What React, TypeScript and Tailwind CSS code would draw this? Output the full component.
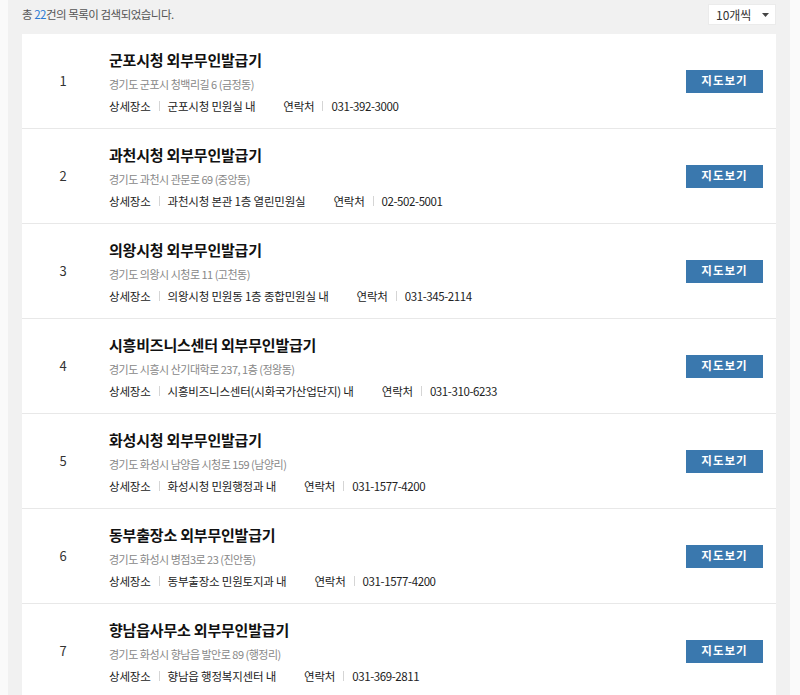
import React from 'react';

type Place = {
  name: string;
  address: string;
  detail: string;
  phone: string;
};

const places: Place[] = [
  { name: '군포시청 외부무인발급기', address: '경기도 군포시 청백리길 6 (금정동)', detail: '군포시청 민원실 내', phone: '031-392-3000' },
  { name: '과천시청 외부무인발급기', address: '경기도 과천시 관문로 69 (중앙동)', detail: '과천시청 본관 1층 열린민원실', phone: '02-502-5001' },
  { name: '의왕시청 외부무인발급기', address: '경기도 의왕시 시청로 11 (고천동)', detail: '의왕시청 민원동 1층 종합민원실 내', phone: '031-345-2114' },
  { name: '시흥비즈니스센터 외부무인발급기', address: '경기도 시흥시 산기대학로 237, 1층 (정왕동)', detail: '시흥비즈니스센터(시화국가산업단지) 내', phone: '031-310-6233' },
  { name: '화성시청 외부무인발급기', address: '경기도 화성시 남양읍 시청로 159 (남양리)', detail: '화성시청 민원행정과 내', phone: '031-1577-4200' },
  { name: '동부출장소 외부무인발급기', address: '경기도 화성시 병점3로 23 (진안동)', detail: '동부출장소 민원토지과 내', phone: '031-1577-4200' },
  { name: '향남읍사무소 외부무인발급기', address: '경기도 화성시 향남읍 발안로 89 (행정리)', detail: '향남읍 행정복지센터 내', phone: '031-369-2811' },
];

function Sep() {
  return <span className="mx-[8px] inline-block h-[10px] w-px bg-[#d5d5d5] align-[-1px]" />;
}

function Row({ p, no }: { p: Place; no: number }) {
  return (
    <li className="flex h-[95px] items-center border-b border-[#e8e8e8]">
      <div className="w-[82px] text-center text-[13px] text-[#333]">{no}</div>
      <div className="flex-1 self-start pl-[5px] pt-[14px]">
        <h3 className="text-[15px] font-bold leading-[24px] tracking-[-0.2px] text-[#111]">{p.name}</h3>
        <p className="mt-[1px] text-[11px] leading-[22px] tracking-[-0.5px] text-[#888]">{p.address}</p>
        <div className="flex items-center text-[11.5px] leading-[22px] tracking-[-0.2px] text-[#222]">
          <span>상세장소</span>
          <Sep />
          <span>{p.detail}</span>
          <span className="ml-[28px]">연락처</span>
          <Sep />
          <span className="tracking-[-0.4px]">{p.phone}</span>
        </div>
      </div>
      <button
        type="button"
        className="mr-[13px] h-[23px] w-[77px] bg-[#3a78ae] text-[11.5px] font-bold tracking-[1px] text-white"
      >
        지도보기
      </button>
    </li>
  );
}

export default function App() {
  return (
    <div
      className="min-h-screen bg-[#fafafa] pl-[8px] pr-[10px]"
      style={{ fontFamily: '"Noto Sans CJK KR", "Noto Sans", sans-serif' }}
    >
      <div className="min-h-[695px] bg-[#f1f1f1] px-[14px] pt-[4px]">
        <div className="flex h-[21px] items-center justify-between">
          <p className="text-[11.5px] tracking-[-0.5px] text-[#555]">
            총 <span className="text-[#2a7ad3]">22</span>건의 목록이 검색되었습니다.
          </p>
          <div className="flex h-[21px] w-[68px] items-center justify-between border border-[#ebebeb] bg-white pl-[7px] pr-[6px] text-[12px] text-[#333]">
            <span>10개씩</span>
            <svg width="7" height="4" viewBox="0 0 7 4" aria-hidden>
              <path d="M0 0h7L3.5 4z" fill="#444" />
            </svg>
          </div>
        </div>
        <ul className="mt-[9px] bg-white">
          {places.map((p, i) => (
            <Row key={i} p={p} no={i + 1} />
          ))}
        </ul>
      </div>
    </div>
  );
}
